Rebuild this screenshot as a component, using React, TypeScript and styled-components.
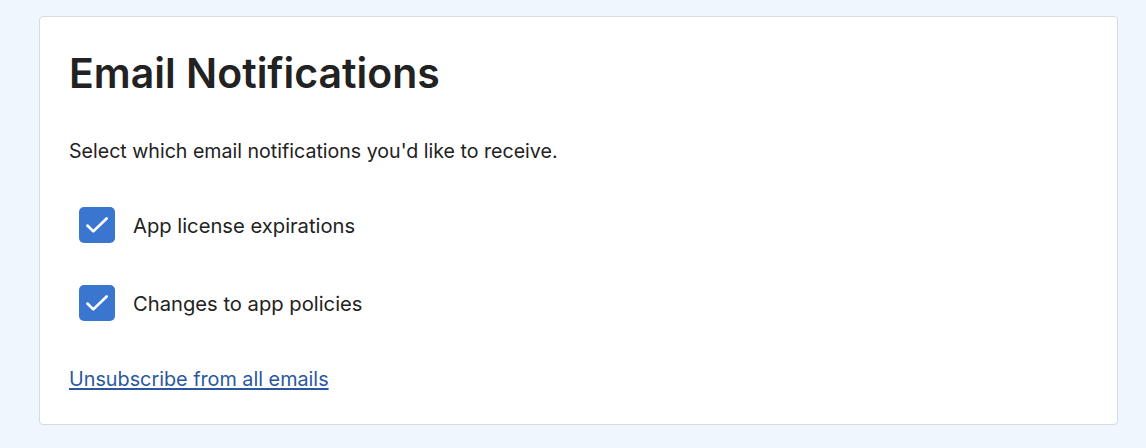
import React, { useState } from 'react';
import styled, { createGlobalStyle } from 'styled-components';

const GlobalStyle = createGlobalStyle`
    body {
        margin: 0;
        background-color: #eff6fe;
        font-family: Inter, "Noto Sans", sans-serif;
        color: #222222;
    }
`;

const Page = styled.div`
    padding: 16px 28px 24px 39px;
`;

const Card = styled.section`
    background-color: #ffffff;
    border: 1px solid #d9dbde;
    border-radius: 4px;
    padding: 26px 30px 32px 29px;
    box-sizing: border-box;
    height: 409px;
`;

const Title = styled.h1`
    font-size: 41px;
    font-weight: 600;
    margin: 0;
    line-height: 60px;
`;

const Lead = styled.p`
    font-size: 19.6px;
    margin: 35px 0 43px;
    line-height: 26px;
`;

const Options = styled.ul`
    list-style: none;
    margin: 0;
    padding: 0 0 0 10px;
    display: flex;
    flex-direction: column;
    gap: 42px;
`;

const Option = styled.li`
    display: flex;
    align-items: center;
    gap: 18px;
    font-size: 20.2px;
    cursor: pointer;
`;

const Box = styled.span<{ $checked: boolean }>`
    width: 36px;
    height: 36px;
    border-radius: 5px;
    background-color: ${({ $checked }) => ($checked ? '#3a76cf' : '#ffffff')};
    border: ${({ $checked }) => ($checked ? 'none' : '2px solid #8a8f98')};
    box-sizing: border-box;
    display: flex;
    align-items: center;
    justify-content: center;
    flex-shrink: 0;
`;

const Link = styled.a`
    display: inline-block;
    margin-top: 46px;
    font-size: 19.8px;
    color: #2a58a0;
    text-decoration: underline;
    text-decoration-thickness: 2px;
    text-underline-offset: 2px;
`;

const options = ['App license expirations', 'Changes to app policies'];

export default function App() {
    const [checked, setChecked] = useState([true, true]);

    function toggle(i: number) {
        setChecked(checked.map((c, j) => (j === i ? !c : c)));
    }

    return (
        <Page>
            <GlobalStyle />
            <Card>
                <Title>Email Notifications</Title>
                <Lead>Select which email notifications you'd like to receive.</Lead>
                <Options>
                    {options.map((label, i) => (
                        <Option key={label} onClick={() => toggle(i)}>
                            <Box $checked={checked[i]}>
                                {checked[i] && (
                                    <svg width="34" height="34" viewBox="0 0 24 24" fill="none">
                                        <path d="M5.2 12.4l4.2 4.1L18.8 7.4" stroke="#ffffff" strokeWidth="1.9" strokeLinecap="round" strokeLinejoin="round" />
                                    </svg>
                                )}
                            </Box>
                            <span>{label}</span>
                        </Option>
                    ))}
                </Options>
                <Link href="#">Unsubscribe from all emails</Link>
            </Card>
        </Page>
    );
}
